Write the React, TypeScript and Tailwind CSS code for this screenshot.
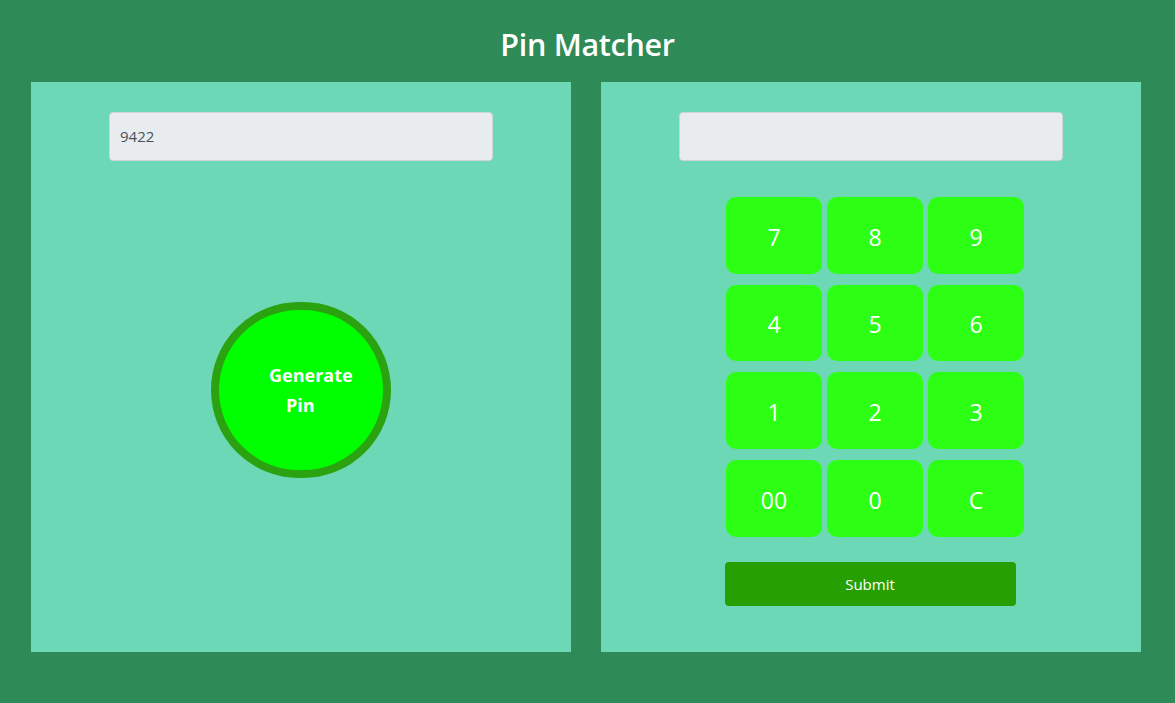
import React from "react";

const keys = ["7", "8", "9", "4", "5", "6", "1", "2", "3", "00", "0", "C"];

export default function App() {
  return (
    <div
      className="w-full min-h-[703px] bg-[#2e8b57] flex flex-col"
      style={{ fontFamily: '"Open Sans", "Noto Sans", sans-serif' }}
    >
      <h1 className="h-[82px] flex items-center justify-center pt-[8px] text-[30.5px] font-semibold text-white tracking-[-0.3px]">
        Pin Matcher
      </h1>
      <div className="flex gap-[30px] pl-[31px]">
        <div className="w-[540px] h-[570px] bg-[#6dd8b5] flex flex-col items-center pt-[30px]">
          <div className="w-[384px] h-[49px] bg-[#e9ecef] border border-[#ced4da] rounded-[4px] flex items-center px-[10px] text-[15px] text-[#495057]">
            9422
          </div>
          <div className="mt-[141px] w-[180px] h-[176px] rounded-full bg-[#00ff00] border-[8px] border-[#2ba20f] flex flex-col justify-center pl-[48px] text-white font-bold text-[18px] leading-[30px]">
            <span className="pl-[2px]">Generate</span>
            <span className="pl-[19px]">Pin</span>
          </div>
        </div>
        <div className="w-[540px] h-[570px] bg-[#6dd8b5] flex flex-col items-center pt-[30px]">
          <div className="w-[384px] h-[49px] bg-[#e9ecef] border border-[#ced4da] rounded-[4px]" />
          <div className="mt-[36px] ml-[8px] grid grid-cols-[96px_96px_96px] gap-x-[5px] gap-y-[11px]">
            {keys.map((k) => (
              <div
                key={k}
                className="h-[76.7px] rounded-[10px] bg-[#2dff14] flex items-center justify-center pt-[3px] text-white text-[23px]"
              >
                {k}
              </div>
            ))}
          </div>
          <button className="mt-[25px] ml-[-2px] w-[291px] h-[44px] rounded-[4px] bg-[#269f02] text-white text-[15px]">
            Submit
          </button>
        </div>
      </div>
    </div>
  );
}
